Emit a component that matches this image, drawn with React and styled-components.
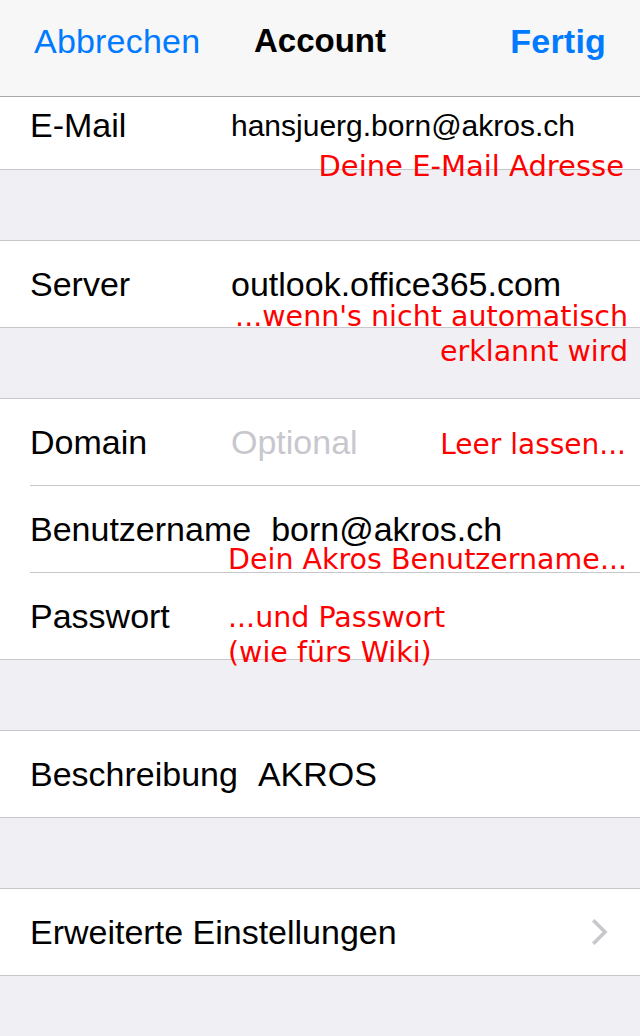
import React from "react";
import styled, { createGlobalStyle } from "styled-components";

const Global = createGlobalStyle`
  html, body { margin: 0; padding: 0; background: #efeff4; }
  body { font-family: "Liberation Sans", Arial, sans-serif; -webkit-font-smoothing: antialiased; }
  * { box-sizing: border-box; }
`;

const Screen = styled.div`
  width: 640px;
  height: 1036px;
  overflow: hidden;
  background: #efeff4;
  display: flex;
  flex-direction: column;
`;

const NavBar = styled.header`
  height: 97px;
  flex: none;
  background: #f7f7f7;
  border-bottom: 1px solid #a9a9ad;
  display: grid;
  grid-template-columns: 1fr auto 1fr;
  align-items: center;
  padding: 0 34px 14px 34px;
`;

const NavButton = styled.span`
  font-size: 34px;
  color: #007aff;
  font-weight: ${(p) => (p.$bold ? 700 : 400)};
  justify-self: ${(p) => (p.$end ? "end" : "start")};
  letter-spacing: 0.2px;
`;

const NavTitle = styled.span`
  font-size: 33px;
  font-weight: 700;
  color: #000;
`;

const Group = styled.section`
  background: #fff;
  border-bottom: 1px solid #c8c7cc;
  border-top: ${(p) => (p.$noTop ? "none" : "1px solid #c8c7cc")};
  margin-bottom: 70px;
`;

const Row = styled.div`
  position: relative;
  height: ${(p) => (p.$cut ? "72px" : "86px")};
  padding-bottom: ${(p) => (p.$cut ? "15px" : "0")};
  padding-left: 30px;
  display: flex;
  align-items: center;
  & + & {
    margin-top: 1px;
  }
  & + &::before {
    content: "";
    position: absolute;
    top: -1px;
    left: 30px;
    right: 0;
    height: 1px;
    background: #c8c7cc;
  }
`;

const Label = styled.span`
  font-size: 34px;
  color: #000;
  min-width: 181px;
  margin-right: 20px;
  white-space: nowrap;
  flex: none;
`;

const Value = styled.span`
  font-size: ${(p) => (p.$small ? "30px" : "34px")};
  color: ${(p) => (p.$placeholder ? "#c7c7cd" : "#000")};
  white-space: nowrap;
`;

const Chevron = styled.svg`
  margin-left: auto;
  margin-right: 32px;
  width: 16px;
  height: 26px;
  flex: none;
`;

const Note = styled.div`
  position: absolute;
  top: ${(p) => p.$top}px;
  ${(p) => (p.$left != null ? `left: ${p.$left}px;` : `right: ${p.$right}px;`)}
  text-align: ${(p) => (p.$left != null ? "left" : "right")};
  font-family: "DejaVu Sans", Verdana, sans-serif;
  font-size: ${(p) => p.$size || 28.5}px;
  line-height: 35px;
  color: #ff0000;
  white-space: nowrap;
  z-index: 2;
`;

const Filler = styled.div`
  flex: 1;
`;

export default function App() {
  return (
    <Screen>
      <Global />
      <NavBar>
        <NavButton>Abbrechen</NavButton>
        <NavTitle>Account</NavTitle>
        <NavButton $bold $end>Fertig</NavButton>
      </NavBar>

      <Group $noTop>
        <Row $cut>
          <Label>E-Mail</Label>
          <Value $small>hansjuerg.born@akros.ch</Value>
          <Note $top={52} $right={16} $size={29}>Deine E-Mail Adresse</Note>
        </Row>
      </Group>

      <Group>
        <Row>
          <Label>Server</Label>
          <Value>outlook.office365.com</Value>
          <Note $top={58} $right={12}>
            ...wenn's nicht automatisch
            <br />
            erklannt wird
          </Note>
        </Row>
      </Group>

      <Group>
        <Row>
          <Label>Domain</Label>
          <Value $placeholder>Optional</Value>
          <Note $top={28} $right={14} $size={28}>Leer lassen...</Note>
        </Row>
        <Row>
          <Label>Benutzername</Label>
          <Value>born@akros.ch</Value>
          <Note $top={56} $left={228}>Dein Akros Benutzername...</Note>
        </Row>
        <Row>
          <Label>Passwort</Label>
          <Note $top={27} $left={228}>
            ...und Passwort
            <br />
            (wie fürs Wiki)
          </Note>
        </Row>
      </Group>

      <Group>
        <Row>
          <Label>Beschreibung</Label>
          <Value>AKROS</Value>
        </Row>
      </Group>

      <Group>
        <Row>
          <Label>Erweiterte Einstellungen</Label>
          <Chevron viewBox="0 0 16 26">
            <path d="M2.5 2.5 L13 13 L2.5 23.5" fill="none" stroke="#c7c7cc" strokeWidth="3.6" strokeLinecap="square" />
          </Chevron>
        </Row>
      </Group>
      <Filler />
    </Screen>
  );
}
